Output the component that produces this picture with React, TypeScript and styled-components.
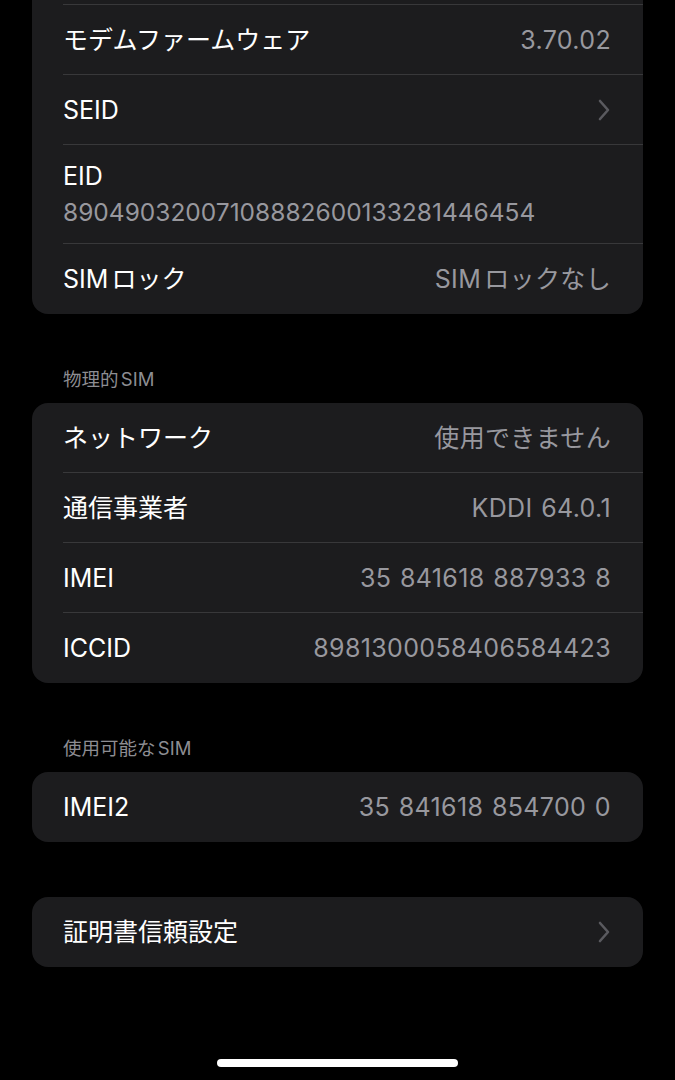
import React from "react";
import styled, { createGlobalStyle } from "styled-components";

const GlobalStyle = createGlobalStyle`
  html, body {
    margin: 0;
    padding: 0;
    background: #000;
  }
  body {
    font-family: Inter, "Noto Sans CJK JP", "Noto Sans", sans-serif;
    -webkit-font-smoothing: antialiased;
    text-autospace: normal;
  }
`;

const Screen = styled.div`
  width: 675px;
  height: 1080px;
  background: #000;
  overflow: hidden;
  display: flex;
  flex-direction: column;
  position: relative;
`;

// the list is scrolled: the row above モデムファームウェア sits off-screen
const Content = styled.div`
  padding: 0 32px;
  margin-top: -65px;
  display: flex;
  flex-direction: column;
`;

const SectionHeader = styled.div`
  padding: 53px 31px 12px;
  height: 24px;
  line-height: 24px;
  font-size: 18.5px;
  color: #8d8d92;
`;

const Card = styled.div<{ gapTop?: number }>`
  background: #1c1c1e;
  border-radius: 16px;
  overflow: hidden;
  margin-top: ${(p) => p.gapTop ?? 0}px;
`;

const Row = styled.div<{ last?: boolean; stacked?: boolean }>`
  position: relative;
  height: ${(p) => (p.stacked ? 99 : 70)}px;
  padding: ${(p) => (p.stacked ? "13px 31px 0" : "0 32px 0 31px")};
  box-sizing: border-box;
  display: flex;
  flex-direction: ${(p) => (p.stacked ? "column" : "row")};
  align-items: ${(p) => (p.stacked ? "flex-start" : "center")};
  justify-content: ${(p) => (p.stacked ? "flex-start" : "space-between")};

  &::after {
    content: "";
    display: ${(p) => (p.last ? "none" : "block")};
    position: absolute;
    left: 31px;
    right: 0;
    bottom: 0;
    height: 1px;
    background: #38383a;
  }
`;

const Label = styled.span`
  font-size: 25px;
  line-height: 36px;
  color: #fff;
`;

const Value = styled.span<{ stacked?: boolean }>`
  font-size: ${(p) => (p.stacked ? 24.5 : 25)}px;
  line-height: 36px;
  letter-spacing: ${(p) => (p.stacked ? 0 : 0.35)}px;
  word-spacing: 1.3px;
  color: #98989e;
`;

const Chevron = styled.svg`
  width: 14px;
  height: 24px;
`;

const HomeBar = styled.div`
  position: absolute;
  left: 217px;
  bottom: 13px;
  width: 241px;
  height: 8px;
  border-radius: 4px;
  background: #fff;
`;

type Item = {
  label: string;
  value?: string;
  chevron?: boolean;
  stacked?: boolean;
};

function ChevronIcon() {
  return (
    <Chevron viewBox="0 0 14 24">
      <path
        d="M3 3 L11 12 L3 21"
        fill="none"
        stroke="#5a5a5f"
        strokeWidth="2.6"
        strokeLinecap="round"
        strokeLinejoin="round"
      />
    </Chevron>
  );
}

function Group({ items, gapTop }: { items: Item[]; gapTop?: number }) {
  return (
    <Card gapTop={gapTop}>
      {items.map((item, i) => (
        <Row key={i} last={i === items.length - 1} stacked={item.stacked}>
          <Label>{item.label}</Label>
          {item.value && <Value stacked={item.stacked}>{item.value}</Value>}
          {item.chevron && <ChevronIcon />}
        </Row>
      ))}
    </Card>
  );
}

const device: Item[] = [
  { label: "Bluetooth" },
  { label: "モデムファームウェア", value: "3.70.02" },
  { label: "SEID", chevron: true },
  { label: "EID", value: "89049032007108882600133281446454", stacked: true },
  { label: "SIMロック", value: "SIMロックなし" },
];

const physical: Item[] = [
  { label: "ネットワーク", value: "使用できません" },
  { label: "通信事業者", value: "KDDI 64.0.1" },
  { label: "IMEI", value: "35 841618 887933 8" },
  { label: "ICCID", value: "8981300058406584423" },
];

const available: Item[] = [{ label: "IMEI2", value: "35 841618 854700 0" }];

const trust: Item[] = [{ label: "証明書信頼設定", chevron: true }];

export default function App() {
  return (
    <>
      <GlobalStyle />
      <Screen>
        <Content>
          <Group items={device} />
          <SectionHeader>物理的SIM</SectionHeader>
          <Group items={physical} />
          <SectionHeader>使用可能なSIM</SectionHeader>
          <Group items={available} />
          <Group items={trust} gapTop={55} />
        </Content>
        <HomeBar />
      </Screen>
    </>
  );
}
